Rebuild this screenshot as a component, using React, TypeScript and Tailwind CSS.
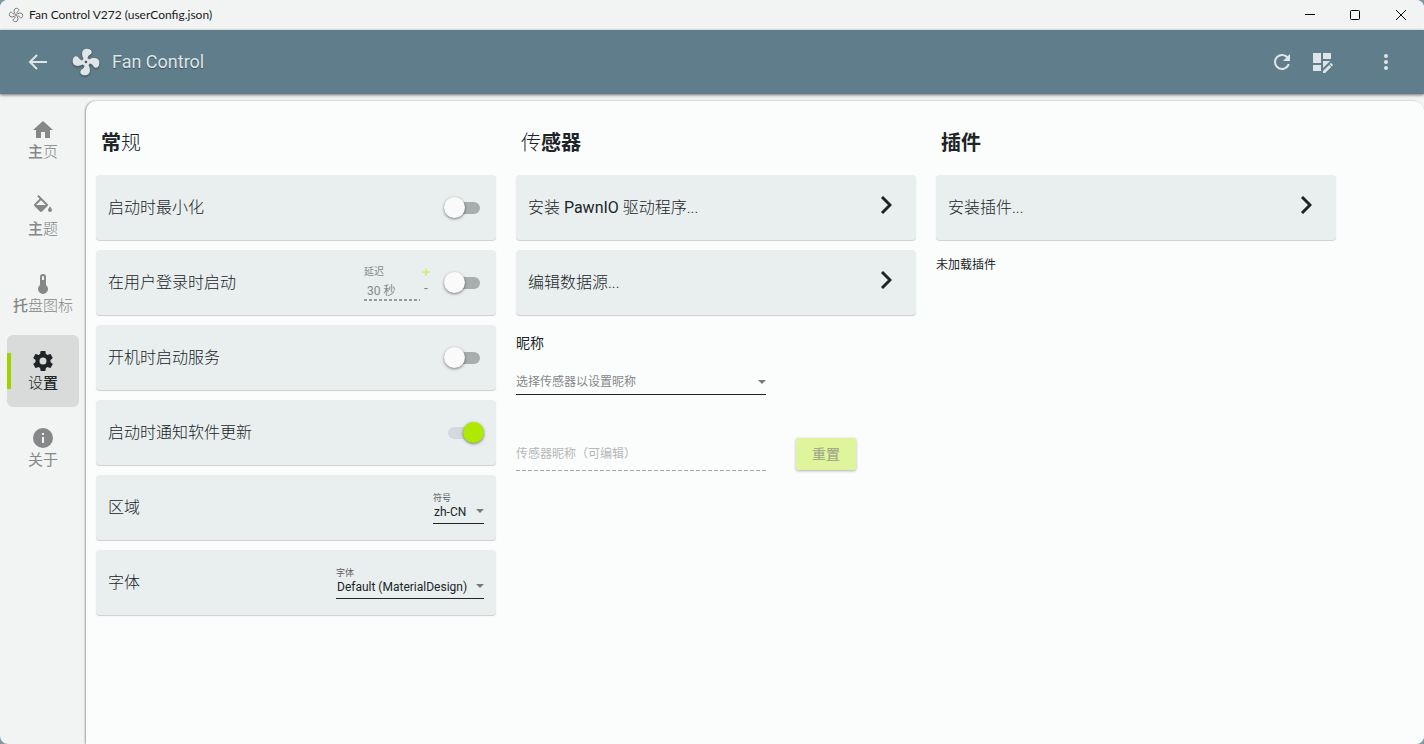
import { useState } from 'react';
import type { ReactNode } from 'react';

const ICONS = {
  home: 'M10,20V14H14V20H19V12H22L12,3L2,12H5V20H10Z',
  theme:
    'M19,11.5C19,11.5 17,13.67 17,15A2,2 0 0,0 19,17A2,2 0 0,0 21,15C21,13.67 19,11.5 19,11.5M5.21,10L10,5.21L14.79,10M16.56,8.94L7.62,0L6.21,1.41L8.59,3.79L3.44,8.94C2.85,9.5 2.85,10.47 3.44,11.06L8.94,16.56C9.23,16.85 9.62,17 10,17C10.38,17 10.77,16.85 11.06,16.56L16.56,11.06C17.15,10.47 17.15,9.5 16.56,8.94Z',
  thermometer:
    'M15 13V5A3 3 0 0 0 9 5V13A5 5 0 1 0 15 13M12 4A1 1 0 0 1 13 5V8H11V5A1 1 0 0 1 12 4Z',
  cog: 'M12,15.5A3.5,3.5 0 0,1 8.5,12A3.5,3.5 0 0,1 12,8.5A3.5,3.5 0 0,1 15.5,12A3.5,3.5 0 0,1 12,15.5M19.43,12.97C19.47,12.65 19.5,12.33 19.5,12C19.5,11.67 19.47,11.34 19.43,11L21.54,9.37C21.73,9.22 21.78,8.95 21.66,8.73L19.66,5.27C19.54,5.05 19.27,4.96 19.05,5.05L16.56,6.05C16.04,5.66 15.5,5.32 14.87,5.07L14.5,2.42C14.46,2.18 14.25,2 14,2H10C9.75,2 9.54,2.18 9.5,2.42L9.13,5.07C8.5,5.32 7.96,5.66 7.44,6.05L4.95,5.05C4.73,4.96 4.46,5.05 4.34,5.27L2.34,8.73C2.21,8.95 2.27,9.22 2.46,9.37L4.57,11C4.53,11.34 4.5,11.67 4.5,12C4.5,12.33 4.53,12.65 4.57,12.97L2.46,14.63C2.27,14.78 2.21,15.05 2.34,15.27L4.34,18.73C4.46,18.95 4.73,19.03 4.95,18.95L7.44,17.94C7.96,18.34 8.5,18.68 9.13,18.93L9.5,21.58C9.54,21.82 9.75,22 10,22H14C14.25,22 14.46,21.82 14.5,21.58L14.87,18.93C15.5,18.67 16.04,18.34 16.56,17.94L19.05,18.95C19.27,19.03 19.54,18.95 19.66,18.73L21.66,15.27C21.78,15.05 21.73,14.78 21.54,14.63L19.43,12.97Z',
  info: 'M13,9H11V7H13M13,17H11V11H13M12,2A10,10 0 0,0 2,12A10,10 0 0,0 12,22A10,10 0 0,0 22,12A10,10 0 0,0 12,2Z',
  fan: 'M12,11A1,1 0 0,0 11,12A1,1 0 0,0 12,13A1,1 0 0,0 13,12A1,1 0 0,0 12,11M12.5,2C17,2 17.11,5.57 14.75,6.75C13.76,7.24 13.32,8.29 13.13,9.22C13.61,9.42 14.03,9.73 14.35,10.13C18.05,8.13 22.03,8.92 22.03,12.5C22.03,17 18.46,17.1 17.28,14.73C16.78,13.74 15.72,13.3 14.79,13.11C14.59,13.59 14.28,14 13.88,14.34C15.87,18.03 15.08,22 11.5,22C7,22 6.91,18.42 9.27,17.24C10.25,16.75 10.69,15.71 10.89,14.79C10.4,14.59 9.97,14.27 9.65,13.87C5.96,15.85 2,15.07 2,11.5C2,7 5.56,6.89 6.74,9.26C7.24,10.25 8.29,10.68 9.22,10.87C9.41,10.39 9.73,9.97 10.14,9.65C8.15,5.96 8.94,2 12.5,2Z',
  refresh:
    'M17.65,6.35C16.2,4.9 14.21,4 12,4A8,8 0 0,0 4,12A8,8 0 0,0 12,20C15.73,20 18.84,17.45 19.73,14H17.65C16.83,16.33 14.61,18 12,18A6,6 0 0,1 6,12A6,6 0 0,1 12,6C13.66,6 15.14,6.69 16.22,7.78L13,11H20V4L17.65,6.35Z',
  dashboardEdit:
    'M3 3H11V13H3ZM3 15H11V21H3ZM13 3H21V9H13ZM13 11H20.1L13 18.1ZM21 13.1C20.9 13.1 20.7 13.2 20.6 13.3L19.6 14.3L21.7 16.4L22.7 15.4C22.9 15.2 22.9 14.8 22.7 14.6L21.4 13.3C21.3 13.2 21.2 13.1 21 13.1M19.1 14.9L13 20.9V23H15.1L21.2 16.9Z',
  dots: 'M12,16A2,2 0 0,1 14,18A2,2 0 0,1 12,20A2,2 0 0,1 10,18A2,2 0 0,1 12,16M12,10A2,2 0 0,1 14,12A2,2 0 0,1 12,14A2,2 0 0,1 10,12A2,2 0 0,1 12,10M12,4A2,2 0 0,1 14,6A2,2 0 0,1 12,8A2,2 0 0,1 10,6A2,2 0 0,1 12,4Z',
};

type IconName = keyof typeof ICONS;

const Icon = ({ name, className }: { name: IconName; className: string }) => (
  <svg viewBox="0 0 24 24" fill="currentColor" fillRule="evenodd" className={className} aria-hidden="true">
    <path d={ICONS[name]} />
  </svg>
);

const TitleBar = () => (
  <div className="flex h-[30px] items-center bg-[#f1f4f3] pl-2">
    <svg viewBox="0 0 24 24" className="size-4" fill="none" stroke="#777777" strokeWidth="1.5" aria-hidden="true">
      <path d={ICONS.fan} />
    </svg>
    <span className="ml-[5px] flex-1 font-[Lato,'Noto_Sans',sans-serif] text-xs text-[#1b1b1b]">
      Fan Control V272 (userConfig.json)
    </span>
    <button aria-label="最小化" className="flex h-full w-[45px] items-center justify-center">
      <svg viewBox="0 0 10 10" className="size-[10px]" stroke="#000" fill="none">
        <path d="M0 4.5H10" />
      </svg>
    </button>
    <button aria-label="最大化" className="flex h-full w-[45px] items-center justify-center">
      <svg viewBox="0 0 10 10" className="size-[10px]" stroke="#000" fill="none">
        <rect x="0.5" y="0.5" width="9" height="9" rx="1" />
      </svg>
    </button>
    <button aria-label="关闭" className="flex h-full w-[47px] items-center justify-center">
      <svg viewBox="0 0 10 10" className="size-[10px]" stroke="#000" fill="none">
        <path d="M0 0L10 10M10 0L0 10" />
      </svg>
    </button>
  </div>
);

const Header = () => (
  <header className="relative flex h-16 items-center bg-[#607d8b] px-[26px] text-[#dfe5e8] shadow-[0_1px_3px_rgba(0,0,0,0.55)]">
    <button aria-label="返回" className="flex size-6 items-center justify-center">
      <svg viewBox="0 0 24 24" className="size-6" fill="none" stroke="currentColor" strokeWidth="2">
        <path d="M21 12H4M11 5L4 12L11 19" />
      </svg>
    </button>
    <Icon name="fan" className="ml-5 size-8 drop-shadow-[0_1px_1px_rgba(0,0,0,0.4)]" />
    <h1 className="ml-[10px] flex-1 text-lg [text-shadow:0_1px_1px_rgba(0,0,0,0.4)]">Fan Control</h1>
    <button aria-label="刷新" className="size-6">
      <Icon name="refresh" className="size-6" />
    </button>
    <button aria-label="编辑布局" className="ml-4 size-6">
      <Icon name="dashboardEdit" className="size-6" />
    </button>
    <button aria-label="菜单" className="ml-10 size-6">
      <Icon name="dots" className="size-6" />
    </button>
  </header>
);

const NAV: { icon: IconName; label: ReactNode }[] = [
  { icon: 'home', label: <><b className="font-medium">主</b>页</> },
  { icon: 'theme', label: <><b className="font-medium">主</b>题</> },
  { icon: 'thermometer', label: <><b className="font-medium">托</b>盘图标</> },
  { icon: 'cog', label: <>设<b className="font-medium">置</b></> },
  { icon: 'info', label: <span className="font-normal">关于</span> },
];

const Sidebar = () => {
  const [active, setActive] = useState<IconName>('cog');

  return (
    <nav className="flex w-[86px] shrink-0 flex-col items-center gap-[5px] pt-[3px]">
      {NAV.map(({ icon, label }) => (
        <button
          key={icon}
          onClick={() => setActive(icon)}
          className={`relative flex h-[72px] w-[72px] flex-col items-center justify-center rounded-md text-[15px] leading-5 font-light whitespace-nowrap ${
            active === icon ? 'bg-[#d9dbda] text-[#202427]' : 'text-[#858788]'
          }`}
        >
          {active === icon && <span className="absolute top-[18px] left-0 h-9 w-1 bg-[#9fd300]" />}
          <Icon name={icon} className="size-6" />
          <span>{label}</span>
        </button>
      ))}
    </nav>
  );
};

const CARD =
  'flex h-[65px] w-full items-center justify-between rounded bg-[#e9efef] px-3 text-base font-light shadow-[0_1px_1px_rgba(0,0,0,0.18)]';

const Toggle = ({ label, defaultOn = false }: { label: string; defaultOn?: boolean }) => {
  const [on, setOn] = useState(defaultOn);

  return (
    <span className="relative flex h-6 w-10 items-center">
      <input
        type="checkbox"
        role="switch"
        aria-label={label}
        checked={on}
        onChange={(e) => setOn(e.target.checked)}
        className="absolute inset-0 z-10 m-0 cursor-pointer opacity-0"
      />
      <span className={`mx-1 h-3 w-8 rounded-full ${on ? 'bg-[#d3dadd]' : 'bg-[#a9adad]'}`} />
      <span
        className={`absolute size-[21px] rounded-full shadow-[0_1px_3px_rgba(0,0,0,0.5)] ${
          on ? 'right-0 bg-[#aeea00]' : 'left-0 bg-[#fafafa]'
        }`}
      />
    </span>
  );
};

const Caret = () => (
  <svg viewBox="0 0 8 4" className="pointer-events-none absolute right-0 bottom-[10px] h-1 w-2" fill="#777b7c">
    <path d="M0 0H8L4 4Z" />
  </svg>
);

const SelectField = ({ label, value, className }: { label: string; value: string; className: string }) => (
  <label className={`relative flex flex-col border-b border-[#202427] text-xs font-normal ${className}`}>
    <span className="text-[9px] leading-3 text-[#5c6163]">{label}</span>
    <select className="h-4 w-full appearance-none pl-px leading-4 outline-none">
      <option>{value}</option>
    </select>
    <Caret />
  </label>
);

const LinkCard = ({ children }: { children: ReactNode }) => (
  <button className={CARD}>
    <span>{children}</span>
    <svg viewBox="0 0 12 18" className="mr-3 mb-[5px] h-[18px] w-3" fill="none" stroke="#202427" strokeWidth="3">
      <path d="M2 1L10 9L2 17" />
    </svg>
  </button>
);

const Column = ({ title, children }: { title: ReactNode; children: ReactNode }) => (
  <section className="flex w-[400px] flex-col gap-[10px]">
    <h2 className="mb-2 pl-[5px] text-xl leading-7 font-light">{title}</h2>
    {children}
  </section>
);

const DelayField = () => (
  <div className="flex items-start font-normal text-[#858a8b]">
    <label className="flex w-[56px] flex-col bg-[repeating-linear-gradient(90deg,#969b9b_0_3px,transparent_3px_5px)] bg-[length:100%_2px] bg-bottom bg-no-repeat pb-[2px]">
      <span className="text-[10px] leading-4">延迟</span>
      <input disabled defaultValue="30 秒" className="h-[19px] w-full pl-[3px] text-xs" />
    </label>
    <div className="flex w-3 flex-col items-center text-sm leading-4">
      <button disabled aria-label="增加" className="font-bold text-[#cfee7f]">+</button>
      <button disabled aria-label="减少">-</button>
    </div>
  </div>
);

const App = () => (
  <div className="bg-[#7f98a3]">
    <div className="flex min-h-screen flex-col overflow-hidden rounded-lg bg-[#f1f4f3] font-[Roboto,'Noto_Sans_CJK_SC',sans-serif] text-[#202427]">
      <TitleBar />
      <Header />
      <div className="flex flex-1 pt-[7px]">
        <Sidebar />
        <main className="flex flex-1 flex-wrap content-start gap-5 rounded-t-[10px] bg-[#fbfdfc] px-[10px] pt-7 shadow-[-1px_0_2px_rgba(0,0,0,0.35)]">
          <Column title={<><b className="font-bold">常</b>规</>}>
            <div className={CARD}>
              <span>启动时最小化</span>
              <Toggle label="启动时最小化" />
            </div>
            <div className={CARD}>
              <span>在用户登录时启动</span>
              <div className="flex items-center gap-3">
                <DelayField />
                <Toggle label="在用户登录时启动" />
              </div>
            </div>
            <div className={CARD}>
              <span>开机时启动服务</span>
              <Toggle label="开机时启动服务" />
            </div>
            <div className={CARD}>
              <span>启动时通知软件更新</span>
              <Toggle label="启动时通知软件更新" defaultOn />
            </div>
            <div className={CARD}>
              <span>区域</span>
              <SelectField label="符号" value="zh-CN" className="h-8 w-[51px]" />
            </div>
            <div className={CARD}>
              <span>字体</span>
              <SelectField label="字体" value="Default (MaterialDesign)" className="h-8 w-[148px]" />
            </div>
          </Column>

          <Column title={<>传<b className="font-bold">感器</b></>}>
            <LinkCard>
              安装 <span className="font-normal">PawnIO</span> 驱动程序...
            </LinkCard>
            <LinkCard>编辑数据源...</LinkCard>
            <h3 className="mt-2 text-sm leading-5">昵称</h3>
            <div className="relative mt-[6px] w-[250px] border-b border-[#202427]">
              <select
                aria-label="选择传感器以设置昵称"
                className="h-6 w-full appearance-none text-xs text-[#858788] outline-none"
              >
                <option>选择传感器以设置昵称</option>
              </select>
              <Caret />
            </div>
            <div className="mt-8 flex items-start gap-[30px]">
              <input
                disabled
                aria-label="传感器昵称"
                placeholder="传感器昵称（可编辑）"
                className="h-[34px] w-[250px] bg-[repeating-linear-gradient(90deg,#a5a8a8_0_4px,transparent_4px_6px)] bg-[length:100%_1px] bg-bottom bg-no-repeat text-xs placeholder:text-[#b5b8b8]"
              />
              <button
                disabled
                className="mt-px h-8 rounded-xs bg-[#dff59b] px-4 text-sm font-medium text-[#a3aa8b] shadow-[0_1px_3px_rgba(0,0,0,0.3)]"
              >
                重置
              </button>
            </div>
          </Column>

          <Column title={<b className="font-bold">插件</b>}>
            <LinkCard>安装插件...</LinkCard>
            <p className="mt-[5px] text-xs leading-5">未加载插件</p>
          </Column>
        </main>
      </div>
    </div>
  </div>
);

export default App;
